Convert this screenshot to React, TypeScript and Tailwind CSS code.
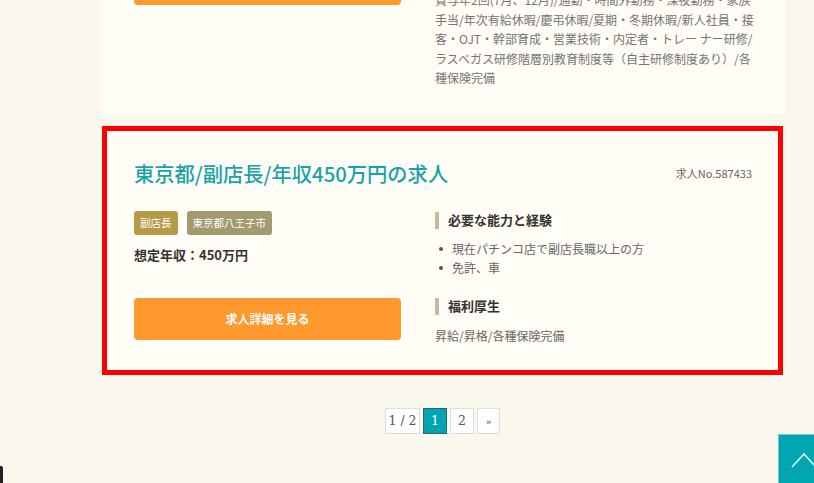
import React from "react";

const jp = { fontFamily: '"Noto Sans CJK JP", "Noto Sans", sans-serif' };

function Heading({ children }: { children: React.ReactNode }) {
  return (
    <div className="flex h-[18px] items-center">
      <span className="h-[17px] w-[4px] bg-[#c7bb9c]" />
      <span className="ml-[9px] text-[13px] font-bold leading-[18px] text-[#333]">{children}</span>
    </div>
  );
}

export default function App() {
  const topLines = [
    "賞与年2回(7月、12月)/通勤・時間外勤務・深夜勤務・家族",
    "手当/年次有給休暇/慶弔休暇/夏期・冬期休暇/新人社員・接",
    "客・OJT・幹部育成・営業技術・内定者・トレー ナー研修/",
    "ラスベガス研修階層別教育制度等（自主研修制度あり）/各",
    "種保険完備",
  ];
  return (
    <div className="relative h-[483px] w-full overflow-hidden bg-[#faf8ec]" style={jp}>
      <div className="w-[685px] ml-[100px]">
        {/* previous card (cut off) */}
        <div className="-mt-[40px] h-[155px] bg-[#fffdf6] pl-[34px] pr-[33px]">
          <div className="grid grid-cols-[267px_1fr] gap-x-[34px]">
            <div className="pt-[3px]">
              <div className="h-[42px] rounded-[4px] bg-[#ff982d]" />
            </div>
            <div className="pt-[30px] text-[12px] leading-[19.5px] text-[#747474]">
              {topLines.map((l) => (
                <div key={l} className="whitespace-nowrap">{l}</div>
              ))}
            </div>
          </div>
        </div>

        {/* highlighted card */}
        <div className="mx-[2px] mt-[11px] border-[5px] border-[#ff0000] bg-[#fffdf6] pl-[27px] pr-[26px] pt-[28px] pb-[25px]">
          <div className="flex items-center justify-between">
            <h2 className="text-[20.3px] font-medium leading-[28px] text-[#19a3a9]">東京都/副店長/年収450万円の求人</h2>
            <span className="text-[11px] leading-[28px] text-[#666]">求人No.587433</span>
          </div>
          <div className="mt-[24px] grid grid-cols-[267px_1fr] gap-x-[34px]">
            <div>
              <div className="flex h-[24px] gap-[9px]">
                <span className="flex items-center rounded-[3px] bg-[#b59b46] px-[6px] text-[10.5px] text-white">副店長</span>
                <span className="flex items-center rounded-[3px] bg-[#a39a6f] px-[6px] text-[10.5px] text-white">東京都八王子市</span>
              </div>
              <div className="mt-[10px] text-[13px] font-bold leading-[20px] text-[#333]">想定年収：450万円</div>
              <button className="mt-[33px] flex h-[42px] w-full items-center justify-center rounded-[4px] bg-[#ff982d] text-[12px] font-bold text-white">
                求人詳細を見る
              </button>
            </div>
            <div>
              <Heading>必要な能力と経験</Heading>
              <ul className="mt-[10px] text-[12px] leading-[19px] text-[#666]">
                {["現在パチンコ店で副店長職以上の方", "免許、車"].map((t) => (
                  <li key={t} className="flex items-center">
                    <span className="ml-[4px] h-[4px] w-[4px] rounded-full bg-[#555]" />
                    <span className="ml-[9px]">{t}</span>
                  </li>
                ))}
              </ul>
              <div className="mt-[20px]">
                <Heading>福利厚生</Heading>
              </div>
              <div className="mt-[11px] text-[12px] leading-[19px] text-[#666]">昇給/昇格/各種保険完備</div>
            </div>
          </div>
        </div>

        {/* pagination */}
        <div
          className="mt-[33px] flex justify-center gap-[3px] text-[12.5px] text-[#555]"
          style={{ fontFamily: '"DejaVu Serif", "Liberation Serif", serif' }}
        >
          <span className="flex h-[26px] w-[35px] items-center justify-center border border-[#ddd] bg-white">1 / 2</span>
          <span className="flex h-[26px] w-[24px] items-center justify-center border border-[#2f6668] bg-[#00a6af] text-white">1</span>
          <span className="flex h-[26px] w-[24px] items-center justify-center border border-[#ddd] bg-white">2</span>
          <span className="flex h-[26px] w-[23px] items-center justify-center border border-[#ddd] bg-white text-[10px]">»</span>
        </div>
      </div>

      {/* back to top */}
      <div className="absolute left-[778px] top-[434px] h-[50px] w-[50px] border border-[#6cc7cc] bg-[#00a7b0]">
        <svg className="absolute left-0 top-0" width="50" height="50" viewBox="0 0 50 50">
          <polyline points="13,32 25,19 37,32" fill="none" stroke="#d9f3f4" strokeWidth="1.6" />
        </svg>
      </div>

      <div className="absolute left-0 top-[466px] h-[17px] w-[3px] rounded-tr-[2px] bg-[#222]" />
    </div>
  );
}
